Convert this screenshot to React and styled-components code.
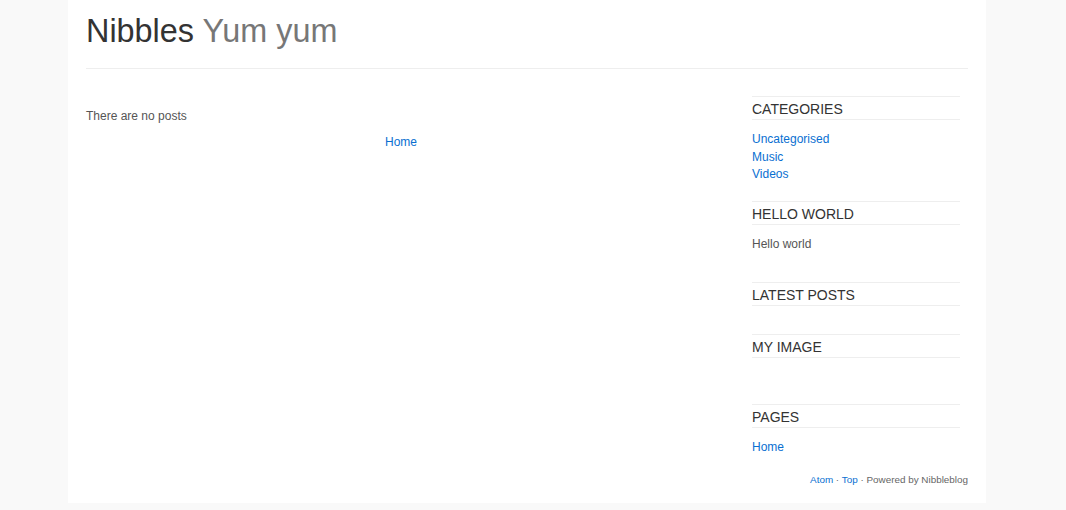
import React from "react";
import styled, { createGlobalStyle } from "styled-components";

const Global = createGlobalStyle`
  html, body { margin: 0; padding: 0; }
  body {
    background: #f9f9f9;
    font-family: "Liberation Sans", Arial, sans-serif;
    font-size: 12px;
    color: #555;
  }
  a { color: #0a6fd1; text-decoration: none; }
`;

const Container = styled.div`
  width: 882px;
  margin: 0 auto 0 68px;
  background: #fff;
  padding: 0 18px 17px;
`;

const Header = styled.header`
  border-bottom: 1px solid #eee;
  padding: 13px 0 18px;
`;

const Title = styled.h1`
  margin: 0;
  font-size: 32.4px;
  line-height: 37px;
  font-weight: normal;
  color: #333;
`;

const Slogan = styled.span`
  color: #777;
`;

const Body = styled.div`
  display: flex;
  align-items: flex-start;
`;

const Main = styled.main`
  width: 630px;
  padding-top: 39px;
`;

const Note = styled.p`
  margin: 0 0 8px;
  line-height: 17.5px;
`;

const Pager = styled.div`
  text-align: center;
  line-height: 17.5px;
`;

const Sidebar = styled.aside`
  width: 208px;
  margin-left: 36px;
  padding-top: 27px;
`;

const Widget = styled.section`
  padding-bottom: 17px;
`;

const WidgetTitle = styled.h2`
  margin: 0 0 11px;
  padding-top: 2px;
  border-top: 1px solid #eee;
  border-bottom: 1px solid #eee;
  font-size: 14px;
  line-height: 20px;
  font-weight: normal;
  color: #333;
  text-transform: uppercase;
`;

const List = styled.ul`
  list-style: none;
  margin: 0;
  padding: 0;
  line-height: 17.5px;
`;

const Text = styled.p`
  margin: 0 0 12px;
  line-height: 17.5px;
`;

const ImageSlot = styled.div`
  height: 18px;
`;

const Footer = styled.footer`
  text-align: right;
  font-size: 9.9px;
  line-height: 12px;
  color: #666;
`;

export default function App() {
  return (
    <>
      <Global />
      <Container>
        <Header>
          <Title>
            Nibbles <Slogan>Yum yum</Slogan>
          </Title>
        </Header>
        <Body>
          <Main>
            <Note>There are no posts</Note>
            <Pager>
              <a href="#">Home</a>
            </Pager>
          </Main>
          <Sidebar>
            <Widget>
              <WidgetTitle>Categories</WidgetTitle>
              <List>
                <li><a href="#">Uncategorised</a></li>
                <li><a href="#">Music</a></li>
                <li><a href="#">Videos</a></li>
              </List>
            </Widget>
            <Widget>
              <WidgetTitle>Hello world</WidgetTitle>
              <Text>Hello world</Text>
            </Widget>
            <Widget>
              <WidgetTitle>Latest posts</WidgetTitle>
            </Widget>
            <Widget>
              <WidgetTitle>My image</WidgetTitle>
              <ImageSlot />
            </Widget>
            <Widget>
              <WidgetTitle>Pages</WidgetTitle>
              <List>
                <li><a href="#">Home</a></li>
              </List>
            </Widget>
          </Sidebar>
        </Body>
        <Footer>
          <a href="#">Atom</a> · <a href="#">Top</a> · Powered by Nibbleblog
        </Footer>
      </Container>
    </>
  );
}
